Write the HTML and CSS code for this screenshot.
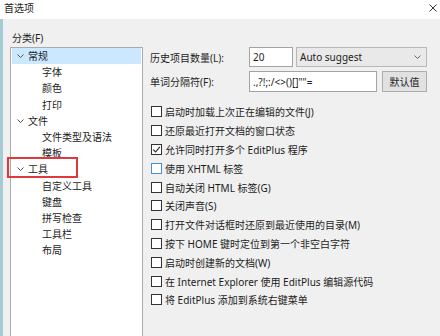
FILE: index.html
```html
<!DOCTYPE html>
<html lang="zh-CN">
<head>
<meta charset="utf-8">
<title>首选项</title>
<link rel="stylesheet" href="styles.css">
</head>
<body>
<div class="window">
  <div class="titlebar">
    <span class="title">首选项</span>
    <svg class="close" width="8" height="8" viewBox="0 0 8 8"><path d="M0.5 0.5 L7.5 7.5 M7.5 0.5 L0.5 7.5" stroke="#333" stroke-width="1" fill="none"/></svg>
  </div>
  <div class="main">
    <div class="left">
      <div class="group-label">分类(F)</div>
      <div class="tree">
        <div class="node parent selected"><svg class="chev" width="7" height="4" viewBox="0 0 7 4"><path d="M0.5 0.5 L3.5 3.5 L6.5 0.5" stroke="#555" fill="none"/></svg><span>常规</span></div>
        <div class="node child">字体</div>
        <div class="node child">颜色</div>
        <div class="node child">打印</div>
        <div class="node parent"><svg class="chev" width="7" height="4" viewBox="0 0 7 4"><path d="M0.5 0.5 L3.5 3.5 L6.5 0.5" stroke="#555" fill="none"/></svg><span>文件</span></div>
        <div class="node child">文件类型及语法</div>
        <div class="node child">模板</div>
        <div class="node parent"><svg class="chev" width="7" height="4" viewBox="0 0 7 4"><path d="M0.5 0.5 L3.5 3.5 L6.5 0.5" stroke="#555" fill="none"/></svg><span>工具</span></div>
        <div class="node child">自定义工具</div>
        <div class="node child">键盘</div>
        <div class="node child">拼写检查</div>
        <div class="node child">工具栏</div>
        <div class="node child">布局</div>
      </div>
    </div>
    <div class="right">
      <div class="form-row">
        <span class="label">历史项目数量(L):</span>
        <div class="input num">20</div>
        <div class="select"><span>Auto suggest</span><svg width="7" height="4" viewBox="0 0 7 4"><path d="M0.5 0.5 L3.5 3.5 L6.5 0.5" stroke="#666" fill="none"/></svg></div>
      </div>
      <div class="form-row row2">
        <span class="label">单词分隔符(F):</span>
        <div class="input sep">.,?!;:/&lt;&gt;()[]""=</div>
        <div class="btn">默认值</div>
      </div>
      <ul class="checks">
        <li><span class="box"></span>启动时加载上次正在编辑的文件(J)</li>
        <li><span class="box"></span>还原最近打开文档的窗口状态</li>
        <li><span class="box"><svg width="9" height="9" viewBox="0 0 9 9"><path d="M1.2 4.6 L3.6 7 L7.8 1.8" stroke="#222" stroke-width="1.1" fill="none"/></svg></span>允许同时打开多个 EditPlus 程序</li>
        <li><span class="box hover"></span>使用 XHTML 标签</li>
        <li><span class="box"></span>自动关闭 HTML 标签(G)</li>
        <li><span class="box"></span>关闭声音(S)</li>
        <li><span class="box"></span>打开文件对话框时还原到最近使用的目录(M)</li>
        <li><span class="box"></span>按下 HOME 键时定位到第一个非空白字符</li>
        <li><span class="box"></span>启动时创建新的文档(W)</li>
        <li><span class="box"></span>在 Internet Explorer 使用 EditPlus 编辑源代码</li>
        <li><span class="box"></span>将 EditPlus 添加到系统右键菜单</li>
      </ul>
    </div>
  </div>
  <div class="annotation"></div>
</div>
</body>
</html>
```

FILE: styles.css
```css
* { box-sizing: border-box; }
body {
  margin: 0;
  font-family: "Noto Sans", "Noto Sans CJK SC", sans-serif;
  font-size: 10px;
  color: #1c1c1c;
}
.window {
  position: relative;
  width: 440px;
  height: 336px;
  background: #f0f0f0;
  overflow: hidden;
}
.titlebar {
  height: 19px;
  background: #fff;
  display: flex;
  align-items: center;
  justify-content: space-between;
  padding: 0 3px 3px 4px;
}
.title { line-height: 14px; }
.main {
  display: flex;
  height: 317px;
  border-left: 3px solid #a5ccd5;
}
.left {
  width: 140px;
  padding-left: 7px;
  padding-top: 12px;
  display: flex;
  flex-direction: column;
}
.group-label {
  line-height: 14px;
  margin-left: 2px;
  margin-bottom: 2px;
}
.tree {
  width: 133px;
  flex: 1;
  background: #fff;
  border: 1px solid #ababab;
  border-bottom: none;
}
.node {
  height: 16.2px;
  display: flex;
  align-items: center;
  line-height: 14px;
}
.parent { padding-left: 6px; }
.chev { margin-right: 4px; }
.child { padding-left: 31px; }
.selected {
  background: #cce8ff;
  margin: 0 1px;
  padding-left: 5px;
}
.right {
  padding-left: 7px;
  padding-top: 28px;
  flex: 1;
}
.form-row {
  display: flex;
  align-items: center;
  height: 20px;
}
.row2 {
  margin-top: 4px;
  height: 21px;
}
.label { width: 99px; }
.input {
  height: 20px;
  background: #fff;
  border: 1px solid #a3a3a3;
  padding-left: 3px;
  display: flex;
  align-items: center;
}
.num { width: 44px; margin-right: 3px; }
.sep { width: 128px; margin-right: 5px; height: 21px; }
.select {
  width: 131px;
  height: 20px;
  background: #e9e9e9;
  border: 1px solid #b8b8b8;
  display: flex;
  align-items: center;
  justify-content: space-between;
  padding: 0 5px 0 3px;
}
.btn {
  width: 45px;
  height: 21px;
  background: #e1e1e1;
  border: 1px solid #adadad;
  display: flex;
  align-items: center;
  justify-content: center;
}
.checks {
  list-style: none;
  margin: 10.6px 0 0 0;
  padding: 0 0 0 1px;
}
.checks li {
  height: 18.8px;
  display: flex;
  align-items: center;
  white-space: nowrap;
}
.box {
  width: 11px;
  height: 11px;
  border: 1px solid #333;
  background: #fff;
  margin-right: 3px;
  flex: none;
  display: flex;
  align-items: center;
  justify-content: center;
}
.box.hover { border-color: #4a90d9; }
.annotation {
  position: absolute;
  left: 7px;
  top: 157px;
  width: 71px;
  height: 21px;
  border: 2px solid #e0393c;
}
```
